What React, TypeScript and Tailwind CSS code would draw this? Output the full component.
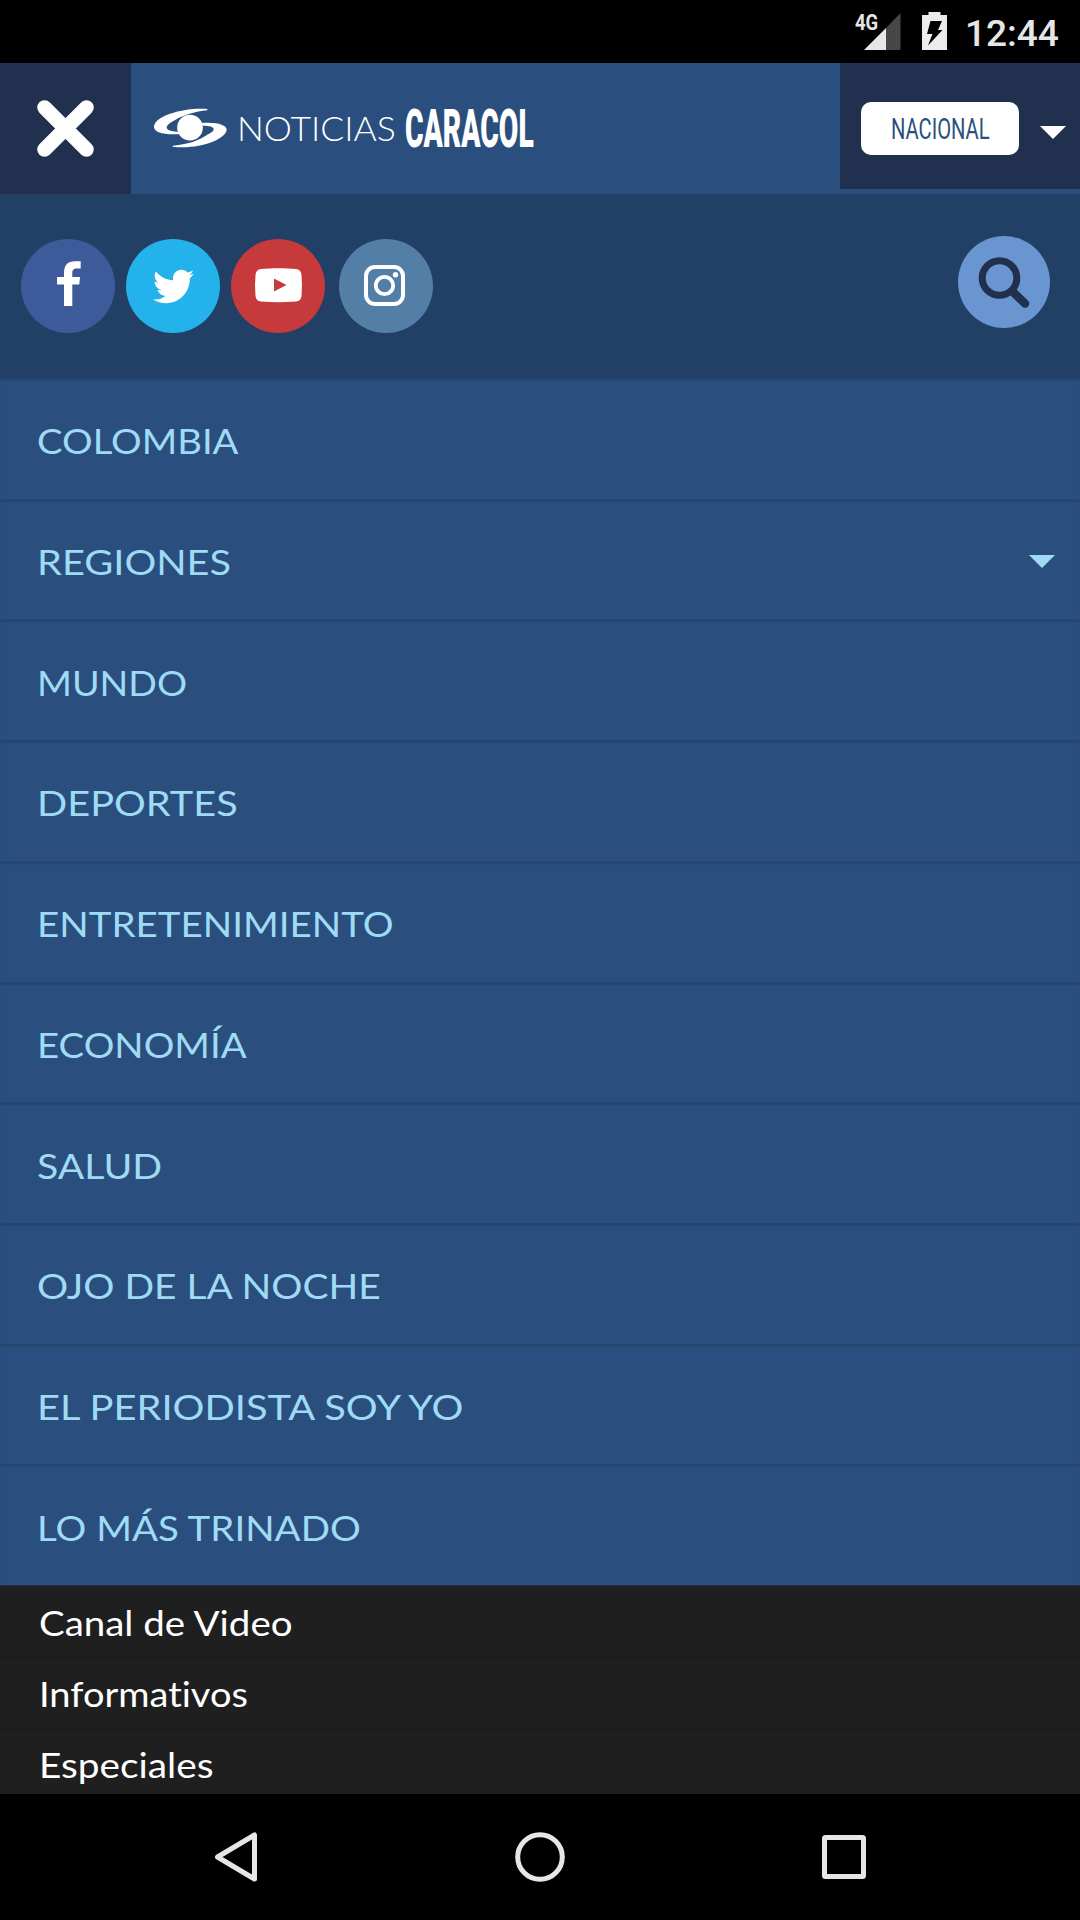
import React from 'react'
import { FaTwitter } from 'react-icons/fa'

interface IMenuItem {
  label: string;
  stretch: string;
  expandable?: boolean;
}

const sections: IMenuItem[] = [
  { label: 'COLOMBIA', stretch: 'scale-x-[1.093]' },
  { label: 'REGIONES', stretch: 'scale-x-[1.136]', expandable: true },
  { label: 'MUNDO', stretch: 'scale-x-[1.075]' },
  { label: 'DEPORTES', stretch: 'scale-x-[1.135]' },
  { label: 'ENTRETENIMIENTO', stretch: 'scale-x-[1.101]' },
  { label: 'ECONOMÍA', stretch: 'scale-x-[1.096]' },
  { label: 'SALUD', stretch: 'scale-x-[1.12]' },
  { label: 'OJO DE LA NOCHE', stretch: 'scale-x-[1.113]' },
  { label: 'EL PERIODISTA SOY YO', stretch: 'scale-x-[1.139]' },
  { label: 'LO MÁS TRINADO', stretch: 'scale-x-[1.1]' },
]

const extras: IMenuItem[] = [
  { label: 'Canal de Video', stretch: 'scale-x-[1.131]' },
  { label: 'Informativos', stretch: 'scale-x-[1.117]' },
  { label: 'Especiales', stretch: 'scale-x-[1.14]' },
]

const StatusBar: React.FC = () => {
  return (
    <div className="flex h-[63px] items-start justify-end bg-black pr-[22px] text-[#e6e6e6]">
      <span className="mt-[12px] w-[9px] whitespace-nowrap text-[22px] leading-[21px] font-bold">
        <span className="inline-block origin-left scale-x-[.84]">4G</span>
      </span>
      <svg className="mt-[13px] h-[37px] w-[37px]" viewBox="0 0 37 37">
        <path d="M0 37 22 15V37Z" fill="#e6e6e6" />
        <path d="M22 15 36.5 0V37H22Z" fill="#474747" />
      </svg>
      <svg className="mt-3 ml-[21px] h-[38px] w-[25px]" viewBox="0 0 25 38">
        <path d="M6.5 0H18.500V3H25V38H0V3H6.500Z" fill="#ececec" />
        <path d="M8.500 9H20L16 18H20.500L6 33.500 10.500 22H5Z" fill="#000" />
      </svg>
      <span className="mt-[13px] ml-[18px] w-[93px] whitespace-nowrap text-[37px] leading-[42px] font-medium">12:44</span>
    </div>
  )
}

const Logo: React.FC = () => {
  return (
    <div className="flex flex-1 items-start text-white">
      <svg className="mt-[45px] ml-[23px] h-[40px] w-[73px]" viewBox="42 54 219 120" fill="#fff">
        <path d="M202 57C135 51 42 77 42 111C43 130 76 135 121 132L112 125C95 125 80 121 80 112C80 104 93 96 112 86C134 75 165 65 202 61Z" />
        <path d="M184 99C228 95 260 104 260 119C258 148 177 179 98 170V167C150 162 176 150 192 140C210 130 221 125 221 118C221 110 208 107 188 107Z" />
        <circle cx="150" cy="113" r="38.500" />
      </svg>
      <span className="mt-[45px] ml-[10px] w-[168px] whitespace-nowrap font-['Lato',sans-serif] text-[34px] leading-[40px] font-light">
        <span className="inline-block origin-left scale-x-[1.045]">NOTICIAS</span>
      </span>
      <span className="mt-[35px] w-[128px] whitespace-nowrap text-[53px] leading-[62px] font-black">
        <span className="inline-block origin-left scale-x-[.534]">CARACOL</span>
      </span>
    </div>
  )
}

const Header: React.FC = () => {
  return (
    <header className="flex h-[131px] bg-[#2a4f7e]">
      <button className="flex w-[131px] items-center justify-center bg-[#20304e]">
        <svg className="h-[57px] w-[57px]" viewBox="0 0 57 57">
          <path d="M7.500 7.500 49.500 49.500M49.500 7.500 7.500 49.500" stroke="#fff" strokeWidth="14.500" strokeLinecap="round" />
        </svg>
      </button>
      <Logo />
      <div className="flex h-[126px] w-[240px] items-start bg-[#20304e] pl-[21px]">
        <div className="mt-[39px] h-[53px] w-[158px] rounded-[10px] bg-white pl-[30px] whitespace-nowrap text-[29px] leading-[54px] font-normal text-[#2a4f7e]">
          <span className="inline-block origin-left scale-x-[.695]">NACIONAL</span>
        </div>
        <svg className="mt-[63px] ml-[21px] h-[13px] w-[26px]" viewBox="0 0 26 13">
          <path d="M0 0H26L13 13Z" fill="#fff" />
        </svg>
      </div>
    </header>
  )
}

const SocialBar: React.FC = () => {
  return (
    <div className="flex h-[184px] items-start bg-[#223f66] pr-[30px] pl-[21px]">
      <a className="mt-[45px] h-[94px] w-[94px] rounded-full bg-[#3d5b9b]">
        <svg viewBox="0 0 94 94" fill="#fff">
          <path d="M43 67V45.500H36V38H43V34C43 26 47 22.300 54 22.300H59.700V29.500H56C52.500 29.500 51.300 31 51.300 34V38H59L58.300 45.500H51.300V67Z" />
        </svg>
      </a>
      <a className="mt-[45px] ml-[11px] flex h-[94px] w-[94px] items-center justify-center rounded-full bg-[#24b2ea]">
        <FaTwitter className="size-[41px] text-white" />
      </a>
      <a className="mt-[45px] ml-[11px] h-[94px] w-[94px] rounded-full bg-[#c63a3c]">
        <svg viewBox="0 0 94 94">
          <path d="M30 30C40 29 54 29 65 30Q70 30.500 70.500 36Q71.500 46 70.500 57Q70 62 65 62.500Q47 64 30 62.500Q25 62 24.500 57Q23.500 46 24.500 36Q25 30.500 30 30Z" fill="#fff" />
          <path d="M43 39.500 55.500 46 43 52.500Z" fill="#c63a3c" />
        </svg>
      </a>
      <a className="mt-[45px] ml-[14px] h-[94px] w-[94px] rounded-full bg-[#537fa6]">
        <svg viewBox="0 0 94 94" fill="none" stroke="#fff">
          <rect x="27" y="28" width="37" height="37" rx="9" strokeWidth="4" />
          <circle cx="45.500" cy="46.500" r="8.700" strokeWidth="3.800" />
          <circle cx="56.500" cy="35.700" r="2.700" fill="#fff" stroke="none" />
        </svg>
      </a>
      <button className="mt-[42px] ml-auto h-[92px] w-[92px] rounded-full bg-[#6995d0]">
        <svg viewBox="0 0 92 92" fill="none" stroke="#20304e">
          <circle cx="41.500" cy="42" r="17.300" strokeWidth="7" />
          <path d="M54.500 55.500 67 67.500" strokeWidth="8.500" strokeLinecap="round" />
        </svg>
      </button>
    </div>
  )
}

const MenuRow: React.FC<{ item: IMenuItem }> = ({ item }) => {
  return (
    <li className="flex flex-1 items-center justify-between bg-[#2a4f7e] pr-[25px] pl-[37px] shadow-[inset_0_3px_1px_#26466f]">
      <span className="pt-[4px] whitespace-nowrap text-[35px] leading-[42px] text-[#9fdbf4]">
        <span className={`inline-block origin-left ${item.stretch}`}>{item.label}</span>
      </span>
      {item.expandable && (
        <svg className="mt-[4px] h-[13px] w-[26px]" viewBox="0 0 26 13">
          <path d="M0 0H26L13 13Z" fill="#9fdbf4" />
        </svg>
      )}
    </li>
  )
}

export default function App() {
  return (
    <div className="flex h-[1920px] w-[1080px] flex-col overflow-hidden bg-black font-['Roboto',sans-serif]">
      <StatusBar />
      <Header />
      <SocialBar />
      <ul className="flex h-[1207px] flex-col font-['Lato',sans-serif]">
        {sections.map((item) => (
          <MenuRow key={item.label} item={item} />
        ))}
      </ul>
      <ul className="h-[209px] overflow-hidden border-t border-[#20304e] bg-[#1f1f1f] pt-[2px] font-['Lato',sans-serif] text-[34px] text-white [font-variant-ligatures:none]">
        {extras.map((item) => (
          <li key={item.label} className="h-[71px] border-b-2 border-[#1c1c1c] pl-[39px] leading-[70px] whitespace-nowrap">
            <span className={`inline-block origin-left ${item.stretch}`}>{item.label}</span>
          </li>
        ))}
      </ul>
      {/* Android navigation keys */}
      <nav className="flex h-[126px] items-center justify-between pr-[211px] pl-[211px]">
        <svg className="size-[50px]" viewBox="0 0 50 50" fill="none" stroke="#e6e6e6">
          <path d="M43.500 3V47L6.500 25Z" strokeWidth="5" strokeLinejoin="round" />
        </svg>
        <svg className="size-[50px]" viewBox="0 0 50 50" fill="none" stroke="#e6e6e6">
          <circle cx="25" cy="25" r="22.300" strokeWidth="5" />
        </svg>
        <svg className="size-[50px]" viewBox="0 0 50 50" fill="none" stroke="#e6e6e6">
          <rect x="5.500" y="5.500" width="39" height="39" rx="1" strokeWidth="5" />
        </svg>
      </nav>
    </div>
  )
}
